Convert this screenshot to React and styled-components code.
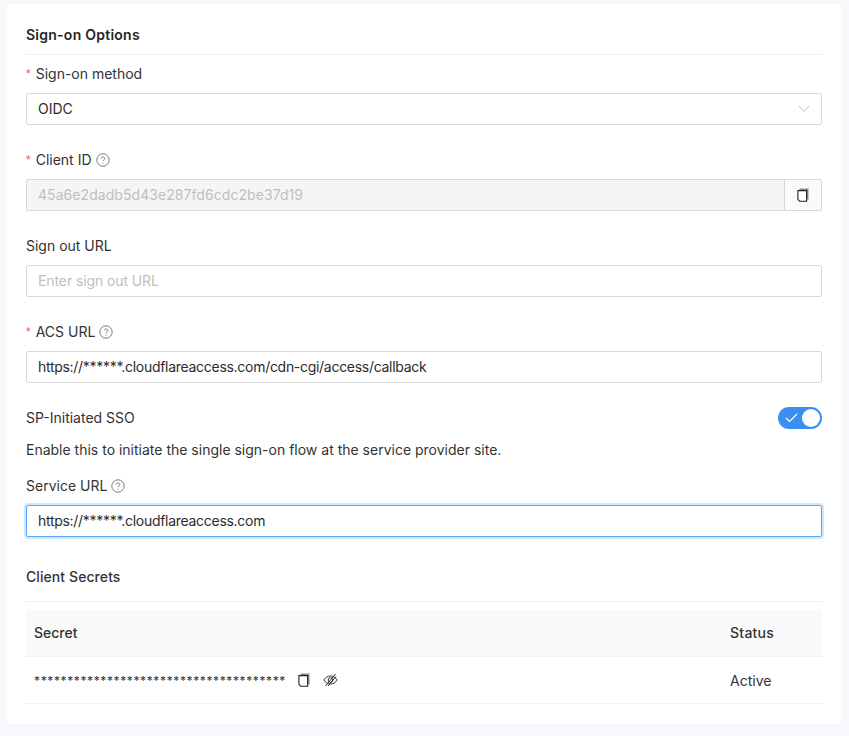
import React from 'react'
import styled, { createGlobalStyle } from 'styled-components'

const GlobalStyle = createGlobalStyle`
  html, body {
    margin: 0;
    padding: 0;
    background: #f6f8fc;
  }
  * {
    box-sizing: border-box;
  }
`

const Page = styled.div`
  width: 849px;
  height: 736px;
  padding: 4px 7px 12px 6px;
  font-family: Inter, 'Liberation Sans', sans-serif;
  font-size: 14px;
  color: #2c2c2c;
  overflow: hidden;
`

const Card = styled.div`
  height: 720px;
  background: #fff;
  border-radius: 4px;
  padding: 20px 20px 0;
`

const OptionsTitle = styled.h3`
  margin: 0 0 8px;
  height: 31px;
  padding-top: 1px;
  line-height: 20px;
  font-size: 14px;
  font-weight: 600;
  letter-spacing: 0.25px;
  color: #262626;
  border-bottom: 1px solid #f0f0f0;
`

const SecretsTitle = styled.h3`
  margin: 0;
  height: 41px;
  padding-top: 6px;
  line-height: 20px;
  font-size: 14px;
  font-weight: 500;
  letter-spacing: 0.08px;
  color: #333;
  border-bottom: 1px solid #f0f0f0;
`

const Field = styled.div`
  margin-bottom: 24px;
`

const Label = styled.div`
  display: flex;
  align-items: center;
  height: 22px;
  line-height: 22px;
  margin-bottom: 8px;
  color: #333;
`

const Star = styled.span`
  color: #ff4d4f;
  margin-right: 5px;
  font-size: 12px;
  font-family: 'Liberation Sans', sans-serif;
`

const HelpWrap = styled.span`
  display: inline-flex;
  margin-left: 4px;
  color: #7a7a7a;
`

const Input = styled.div`
  height: 32px;
  line-height: 30px;
  padding: 0 11px;
  flex: 1;
  min-width: 0;
  background: ${p => (p.$disabled ? '#f5f5f5' : '#fff')};
  border: 1px solid ${p => (p.$focused ? '#58a6f5' : '#d9d9d9')};
  border-right-width: ${p => (p.$addon ? 0 : 1)}px;
  border-radius: ${p => (p.$addon ? '2px 0 0 2px' : '2px')};
  box-shadow: ${p => (p.$focused ? '0 0 0 2px rgba(24, 144, 255, 0.2)' : 'none')};
  color: ${p => (p.$muted ? '#bfbfbf' : '#2c2c2c')};
  letter-spacing: ${p => p.$spacing || 0}px;
  display: flex;
  align-items: center;
  justify-content: space-between;
`

const InputGroup = styled.div`
  display: flex;
`

const Addon = styled.div`
  width: 38px;
  height: 32px;
  display: flex;
  align-items: center;
  justify-content: center;
  background: #fafafa;
  border: 1px solid #d9d9d9;
  border-radius: 0 2px 2px 0;
  color: #333;
`

const SwitchRow = styled.div`
  display: flex;
  justify-content: space-between;
  align-items: flex-start;
  height: 22px;
  margin-bottom: 10px;
  line-height: 22px;
  color: #333;
`

const Switch = styled.div`
  width: 44px;
  height: 22px;
  border-radius: 11px;
  background: #3b8ff3;
  display: flex;
  align-items: center;
  justify-content: space-between;
  padding: 0 2px 0 7px;
  color: #fff;
`

const Knob = styled.span`
  width: 18px;
  height: 18px;
  border-radius: 50%;
  background: #fff;
`

const Description = styled.div`
  height: 22px;
  line-height: 22px;
  margin-bottom: 14px;
  color: #333;
`

const Table = styled.div`
  margin-top: 8px;
`

const Row = styled.div`
  display: grid;
  grid-template-columns: 1fr 92px;
  align-items: center;
  height: 47px;
  padding-left: 8px;
  padding-bottom: ${p => (p.$head ? 2 : 0)}px;
  background: ${p => (p.$head ? '#fafafa' : '#fff')};
  border-bottom: 1px solid #f0f0f0;
  font-weight: ${p => (p.$head ? 500 : 400)};
  color: #333;
`

const SecretCell = styled.div`
  display: flex;
  align-items: center;
`

const Stars = styled.span`
  width: 264px;
  font-size: 12px;
  letter-spacing: 0.62px;
  color: #333;
`

const StatusHead = styled.div`
  letter-spacing: 0.25px;
`

const RowIcon = styled.span`
  display: inline-flex;
  width: 25px;
  color: #444;
`

const HelpIcon = () => (
  <HelpWrap>
    <svg width="14" height="14" viewBox="0 0 14 14" fill="none" stroke="currentColor">
      <circle cx="7" cy="7" r="6.2" />
      <path d="M5.2 5.6c0-1 .8-1.7 1.8-1.7s1.8.7 1.8 1.6c0 1.3-1.8 1.3-1.8 2.7" />
      <circle cx="7" cy="10.1" r=".6" fill="currentColor" stroke="none" />
    </svg>
  </HelpWrap>
)

const CopyIcon = () => (
  <svg width="12" height="14" viewBox="0 0 12 14" fill="none">
    <path d="M2.500.6h9v10.800h-2V2.600h-7z" fill="#8a8a8a" />
    <path d="M.9 2.600h8.700v10.600H2.600L.9 11.400z" stroke="#222" strokeWidth="1.100" fill="#fff" />
  </svg>
)

const EyeOffIcon = () => (
  <svg width="15" height="14" viewBox="0 0 15 14" fill="none" stroke="#333" strokeWidth="1">
    <path d="M.8 7c1.700-2.600 3.900-4 6.700-4s5 1.400 6.700 4c-1.700 2.600-3.900 4-6.700 4S2.500 9.600.8 7z" />
    <circle cx="7.500" cy="7" r="2.300" />
    <path d="M2.500 13 12.500 1M5 13l8-9.500" />
  </svg>
)

const ChevronIcon = () => (
  <svg width="12" height="8" viewBox="0 0 12 8" fill="none" stroke="#bfbfbf" strokeWidth="1">
    <path d="M1 1l5 5.500L11 1" />
  </svg>
)

const CheckIcon = () => (
  <svg width="13" height="10" viewBox="0 0 13 10" fill="none" stroke="#fff" strokeWidth="1.200">
    <path d="M1 5l3.500 3.500L12 1" />
  </svg>
)

const App = () => {
  return (
    <>
      <GlobalStyle />
      <Page>
        <Card>
          <OptionsTitle>Sign-on Options</OptionsTitle>
          <Field>
            <Label><Star>*</Star>Sign-on method</Label>
            <Input>
              OIDC
              <ChevronIcon />
            </Input>
          </Field>
          <Field>
            <Label><Star>*</Star>Client ID<HelpIcon /></Label>
            <InputGroup>
              <Input $disabled $muted $addon $spacing={0.06}>45a6e2dadb5d43e287fd6cdc2be37d19</Input>
              <Addon><CopyIcon /></Addon>
            </InputGroup>
          </Field>
          <Field>
            <Label>Sign out URL</Label>
            <Input $muted $spacing={-0.1}>Enter sign out URL</Input>
          </Field>
          <Field>
            <Label><Star>*</Star>ACS URL<HelpIcon /></Label>
            <Input $spacing={-0.29}>https://******.cloudflareaccess.com/cdn-cgi/access/callback</Input>
          </Field>
          <SwitchRow>
            SP-Initiated SSO
            <Switch>
              <CheckIcon />
              <Knob />
            </Switch>
          </SwitchRow>
          <Description>Enable this to initiate the single sign-on flow at the service provider site.</Description>
          <Field>
            <Label>Service URL<HelpIcon /></Label>
            <Input $focused $spacing={-0.29}>https://******.cloudflareaccess.com</Input>
          </Field>
          <SecretsTitle>Client Secrets</SecretsTitle>
          <Table>
            <Row $head>
              <div>Secret</div>
              <StatusHead>Status</StatusHead>
            </Row>
            <Row>
              <SecretCell>
                <Stars>**************************************</Stars>
                <RowIcon><CopyIcon /></RowIcon>
                <RowIcon><EyeOffIcon /></RowIcon>
              </SecretCell>
              <div>Active</div>
            </Row>
          </Table>
        </Card>
      </Page>
    </>
  )
}

export default App
